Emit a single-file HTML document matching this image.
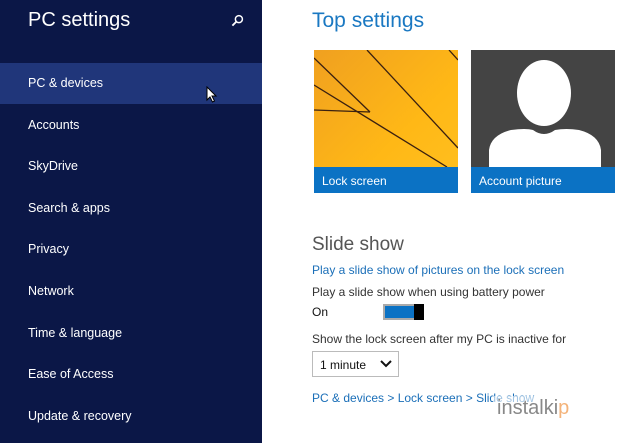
<!DOCTYPE html>
<html><head><meta charset="utf-8"><style>
*{margin:0;padding:0;box-sizing:border-box}
body{width:620px;height:443px;overflow:hidden;font-family:"Liberation Sans",sans-serif;background:#fff;position:relative}
#side{position:absolute;left:0;top:0;width:262px;height:443px;background:#0b1747}
#side h1{position:absolute;left:28px;top:9px;font-weight:normal;font-size:20px;color:#fff}
.it{position:absolute;left:0;width:262px;height:41px;color:#fff;font-size:12.5px;padding-left:28px;line-height:41px}
.sel{background:#20367a}
.a{position:absolute;color:#333;font-size:12px}
</style></head><body>
<div id="side">
<h1>PC settings</h1>
<svg style="position:absolute;left:231px;top:14px" width="13" height="13" viewBox="0 0 14 14"><circle cx="8.5" cy="5.5" r="3.8" fill="none" stroke="#fff" stroke-width="1.6"/><line x1="5.8" y1="8.2" x2="1.5" y2="12.5" stroke="#fff" stroke-width="2"/></svg>
<div class="it sel" style="top:63px">PC &amp; devices</div>
<svg style="position:absolute;left:206px;top:86px" width="12" height="17" viewBox="0 0 12 17"><path d="M1 1 L1 14 L4 11 L6.5 16 L8.5 15 L6 10 L10 10 Z" fill="#fff" stroke="#000" stroke-width="1"/></svg>
<div class="it" style="top:105px">Accounts</div>
<div class="it" style="top:146px">SkyDrive</div>
<div class="it" style="top:188px">Search &amp; apps</div>
<div class="it" style="top:229px">Privacy</div>
<div class="it" style="top:271px">Network</div>
<div class="it" style="top:313px">Time &amp; language</div>
<div class="it" style="top:354px">Ease of Access</div>
<div class="it" style="top:396px">Update &amp; recovery</div>
</div>
<div style="position:absolute;left:312px;top:9px;font-size:21px;color:#1a78c2">Top settings</div>
<div style="position:absolute;left:314px;top:50px;width:144px;height:143px;background:linear-gradient(135deg,#f0a020,#ffb816 60%,#ffc020);overflow:hidden">
<svg width="144" height="117" style="position:absolute;left:0;top:0"><g stroke="#3a2010" stroke-width="1.3" fill="none"><line x1="0" y1="8" x2="56" y2="62"/><line x1="0" y1="35" x2="133" y2="117"/><line x1="0" y1="60" x2="56" y2="62"/><line x1="53" y1="0" x2="144" y2="98"/><line x1="135" y1="0" x2="144" y2="10"/></g></svg>
<div style="position:absolute;left:0;top:117px;width:144px;height:26px;background:#0b72c4;color:#fff;font-size:12px;padding:7px 0 0 8px">Lock screen</div></div>
<div style="position:absolute;left:471px;top:50px;width:144px;height:143px;background:#444;overflow:hidden">
<svg width="144" height="117" style="position:absolute;left:0;top:0"><ellipse cx="73" cy="43" rx="27" ry="33" fill="#fff"/><path d="M18 117 L18 100 Q20 85 40 80 Q55 78 62 80 Q73 88 84 80 Q95 78 108 80 Q128 85 130 100 L130 117 Z" fill="#fff"/></svg>
<div style="position:absolute;left:0;top:117px;width:144px;height:26px;background:#0b72c4;color:#fff;font-size:12px;padding:7px 0 0 8px">Account picture</div></div>
<div style="position:absolute;left:312px;top:234px;font-size:19px;color:#555">Slide show</div>
<div class="a" style="left:312px;top:263px;color:#1b6fb8">Play a slide show of pictures on the lock screen</div>
<div class="a" style="left:312px;top:285px">Play a slide show when using battery power</div>
<div class="a" style="left:312px;top:305px;color:#111">On</div>
<div style="position:absolute;left:383px;top:304px;width:41px;height:16px;border:2px solid #aaa;background:#0b72c4"></div>
<div style="position:absolute;left:414px;top:304px;width:10px;height:16px;background:#000"></div>
<div class="a" style="left:312px;top:332px">Show the lock screen after my PC is inactive for</div>
<div style="position:absolute;left:312px;top:351px;width:87px;height:26px;border:1px solid #bbb;font-size:12px;color:#111;padding:6px 0 0 7px">1 minute</div>
<svg style="position:absolute;left:380px;top:360px" width="12" height="8"><path d="M1 1 L6 6 L11 1" stroke="#111" stroke-width="2" fill="none"/></svg>
<div class="a" style="left:312px;top:391px;color:#1b6fb8">PC &amp; devices &gt; Lock screen &gt; Slide show</div>
<div style="position:absolute;left:493px;top:396px;width:118px;height:24px;background:rgba(255,255,255,0.6);color:#888;font-size:20px;line-height:24px;padding-left:4px">instalki<span style="color:#f4b37a">p</span></div>
</body></html>
